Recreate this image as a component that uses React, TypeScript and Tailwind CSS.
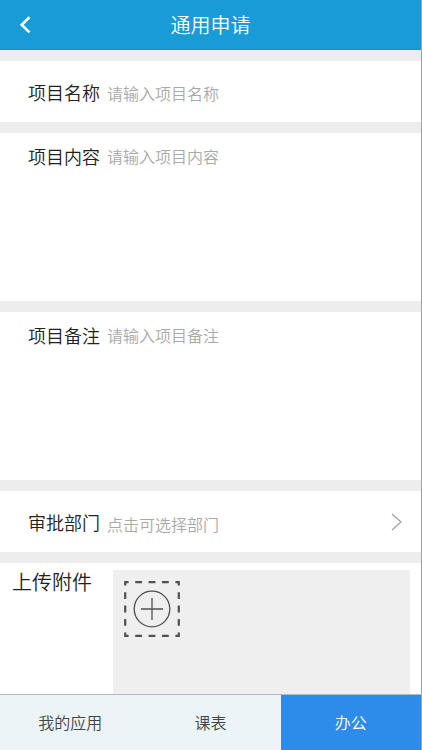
import type { ReactNode } from "react";

interface FieldParams {
	id: string;
	label: string;
	children: ReactNode;
}

interface AreaParams {
	id: string;
	label: string;
	placeholder: string;
}

const Field = ({ id, label, children }: FieldParams): JSX.Element => {
	return (
		<div className="flex h-[61px] items-center bg-white pl-7 pr-4">
			<label htmlFor={id} className="w-[79px] shrink-0 text-[18px] leading-6">
				{label}
			</label>
			{children}
		</div>
	);
};

const AreaField = ({ id, label, placeholder }: AreaParams): JSX.Element => {
	return (
		<div className="flex min-h-[168px] bg-white pl-7 pr-4 pt-[11px]">
			<label htmlFor={id} className="w-[79px] shrink-0 text-[18px] leading-6">
				{label}
			</label>
			<textarea
				id={id}
				placeholder={placeholder}
				className="min-w-0 flex-1 resize-none bg-transparent text-[16px] leading-6 outline-none placeholder:text-[#a9a9a9]"
			/>
		</div>
	);
};

const tabs = [
	{ name: "我的应用", active: false },
	{ name: "课表", active: false },
	{ name: "办公", active: true },
];

const App = (): JSX.Element => {
	return (
		<div className="flex min-h-screen flex-col border-r border-[#a0a5a8] bg-[#ededed] font-['Noto_Sans_CJK_SC',sans-serif] font-[350] text-[#222222]">
			<header className="grid h-[50px] grid-cols-[50px_1fr_50px] items-center border-b border-[#1b8fc9] bg-[#189bd6] text-white">
				<button type="button" aria-label="返回" className="flex h-full items-center justify-center">
					<svg width="12" height="20" viewBox="0 0 12 20" fill="none">
						<path d="M10.5 2.2 2.7 9.8 10.5 17.4" stroke="currentColor" strokeWidth="2.6" />
					</svg>
				</button>
				<h1 className="text-center text-[20px] font-[350] leading-6">通用申请</h1>
			</header>

			<form className="flex flex-1 flex-col gap-[11px] pt-[11px]">
				<Field id="name" label="项目名称">
					<input
						id="name"
						type="text"
						placeholder="请输入项目名称"
						className="min-w-0 flex-1 bg-transparent pt-0.5 text-[16px] leading-6 outline-none placeholder:text-[#a9a9a9]"
					/>
				</Field>
				<AreaField id="content" label="项目内容" placeholder="请输入项目内容" />
				<AreaField id="remark" label="项目备注" placeholder="请输入项目备注" />
				<Field id="department" label="审批部门">
					<select
						id="department"
						className="min-w-0 flex-1 appearance-none bg-transparent pt-1 text-[16px] leading-6 text-[#a9a9a9] outline-none"
					>
						<option>点击可选择部门</option>
					</select>
					<svg width="16" height="20" viewBox="0 0 16 20" fill="none" className="shrink-0">
						<path d="M3 2 12 10 3 18" stroke="#a0a0a0" strokeWidth="1.2" />
					</svg>
				</Field>

				<div className="flex min-h-[130px] flex-1 bg-white pl-3 pr-[11px] pt-[7px]">
					<h2 className="w-[101px] shrink-0 text-[20px] font-[350] leading-6">上传附件</h2>
					<div className="flex-1 bg-[#efefef] p-[11px]">
						<button type="button" aria-label="添加附件" className="block">
							<svg width="56" height="56" viewBox="0 0 56 56" fill="none" stroke="#505050">
								<path
									d="M1.2 1.2H54.8V54.8H1.2Z"
									strokeWidth="2.2"
									strokeDasharray="6.8 6.6"
									strokeDashoffset="3.4"
								/>
								<circle cx="28" cy="28" r="17.8" strokeWidth="1.3" />
								<path d="M28 17V39M17 28H39" strokeWidth="1.3" />
							</svg>
						</button>
					</div>
				</div>
			</form>

			<nav className="grid h-14 grid-cols-3 border-t border-[#b5bcc0] bg-[#ebf5f8] text-[16px] leading-6">
				{tabs.map((tab) => (
					<a
						key={tab.name}
						href="#"
						className={
							tab.active
								? "flex items-center justify-center bg-[#2d8cea] pb-0.5 text-white"
								: "flex items-center justify-center pb-0.5 text-[#444444]"
						}
					>
						{tab.name}
					</a>
				))}
			</nav>
		</div>
	);
};

export default App;
